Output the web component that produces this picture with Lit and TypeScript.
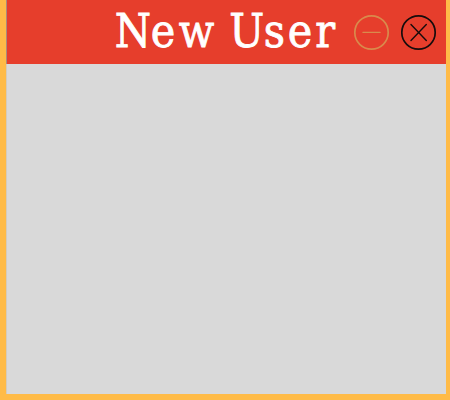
import { LitElement, html, css } from "lit";
import { customElement } from "lit/decorators.js";

@customElement("app-root")
export class AppRoot extends LitElement {
  static styles = css`
    :host {
      display: flex;
      flex-direction: column;
      box-sizing: border-box;
      width: 100vw;
      height: 100vh;
      border: solid #ffbb47;
      border-width: 0 4px 6px 6px;
      background: #d9d9d9;
      overflow: hidden;
    }
    header {
      display: flex;
      flex: 0 0 64px;
      box-sizing: border-box;
      border-left: 1px solid #a98c7c;
      background: #e63e2c;
    }
    svg {
      display: block;
      width: 439px;
      height: 64px;
    }
    .title {
      font: 47.5px "DejaVu Serif Condensed", "DejaVu Serif", serif;
      font-stretch: condensed;
      fill: #fff;
      stroke: #fff;
      stroke-width: 0.8;
    }
    .icon {
      fill: none;
      stroke-width: 1.7;
      stroke-linecap: round;
    }
    .minimize { stroke: #d98a4c; }
    .close { stroke: #160c0c; }
    .thin { stroke-width: 1.4; }
    main {
      flex: 1;
      border-left: 1px solid #d6cbb9;
    }
  `;

  render() {
    return html`
      <header>
        <svg viewBox="7 0 439 64">
          <text class="title" transform="scale(.97 1)" y="47.5"
            x="118.2 155.3 184.3 205 236.4 271.9 296.6 325">New User</text>
          <g class="icon minimize">
            <circle cx="371.5" cy="32.5" r="16.7" />
            <path class="thin" d="M363 32.4H380" />
          </g>
          <g class="icon close">
            <circle cx="418.5" cy="32.5" r="16.7" />
            <path class="thin" d="M411 24.5L426.3 40.5M426.3 24.5L411 40.5" />
          </g>
        </svg>
      </header>
      <main></main>
    `;
  }
}
